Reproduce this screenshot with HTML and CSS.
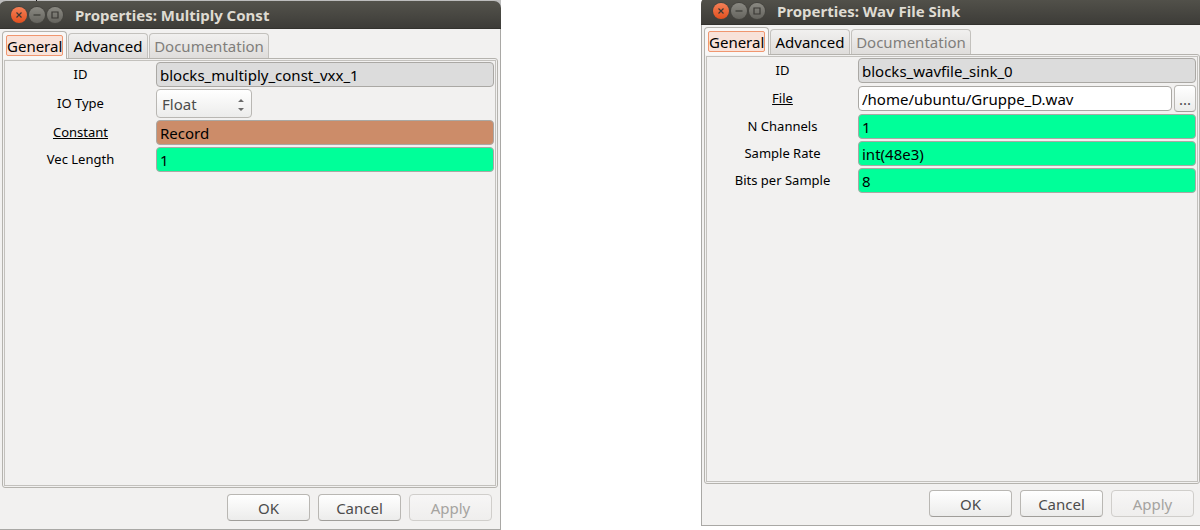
FILE: index.html
```html
<!DOCTYPE html>
<html lang="en">
<head>
<meta charset="utf-8">
<title>Block properties</title>
<link rel="stylesheet" href="styles.css">
</head>
<body>
<main class="desktop">
  <section class="slot slot-left">
    <form class="window" aria-label="Properties: Multiply Const">
      <header class="titlebar">
        <div class="controls">
          <button type="button" class="control close" aria-label="Close"><svg viewBox="0 0 16 16"><path d="M5.5 5.5l5 5M10.5 5.5l-5 5"/></svg></button>
          <button type="button" class="control" aria-label="Minimize"><svg viewBox="0 0 16 16"><path d="M4.5 8h7"/></svg></button>
          <button type="button" class="control" aria-label="Maximize"><svg viewBox="0 0 16 16"><path d="M5 5h6v6H5z"/></svg></button>
        </div>
        <h1 class="title">Properties: Multiply Const</h1>
      </header>
      <div class="body">
        <div class="tabs" role="tablist">
          <button type="button" class="tab active" role="tab" aria-selected="true"><span class="focus">General</span></button>
          <button type="button" class="tab advanced" role="tab">Advanced</button>
          <button type="button" class="tab documentation" role="tab" disabled>Documentation</button>
        </div>
        <div class="page">
          <div class="fields">
            <label for="m-id">ID</label>
            <input class="entry readonly" id="m-id" value="blocks_multiply_const_vxx_1" readonly>
            <label for="m-type">IO Type</label>
            <div class="combo">
              <select id="m-type"><option>Float</option></select>
              <svg class="arrows" viewBox="0 0 8 14"><path d="M1 4h6L4 1zM1 10h6l-3 3z"/></svg>
            </div>
            <label class="changed" for="m-const">Constant</label>
            <input class="entry complex" id="m-const" value="Record">
            <label for="m-vec">Vec Length</label>
            <input class="entry integer" id="m-vec" value="1">
          </div>
        </div>
        <footer class="actions">
          <button type="button" class="button">OK</button>
          <button type="button" class="button">Cancel</button>
          <button type="button" class="button" disabled>Apply</button>
        </footer>
      </div>
    </form>
  </section>
  <section class="slot slot-right">
    <form class="window" aria-label="Properties: Wav File Sink">
      <header class="titlebar">
        <div class="controls">
          <button type="button" class="control close" aria-label="Close"><svg viewBox="0 0 16 16"><path d="M5.5 5.5l5 5M10.5 5.5l-5 5"/></svg></button>
          <button type="button" class="control" aria-label="Minimize"><svg viewBox="0 0 16 16"><path d="M4.5 8h7"/></svg></button>
          <button type="button" class="control" aria-label="Maximize"><svg viewBox="0 0 16 16"><path d="M5 5h6v6H5z"/></svg></button>
        </div>
        <h1 class="title">Properties: Wav File Sink</h1>
      </header>
      <div class="body">
        <div class="tabs" role="tablist">
          <button type="button" class="tab active" role="tab" aria-selected="true"><span class="focus">General</span></button>
          <button type="button" class="tab advanced" role="tab">Advanced</button>
          <button type="button" class="tab documentation" role="tab" disabled>Documentation</button>
        </div>
        <div class="page">
          <div class="fields">
            <label for="w-id">ID</label>
            <input class="entry readonly" id="w-id" value="blocks_wavfile_sink_0" readonly>
            <label class="changed" for="w-file">File</label>
            <div class="file">
              <input class="entry" id="w-file" value="/home/ubuntu/Gruppe_D.wav">
              <button type="button" class="browse" aria-label="Browse">...</button>
            </div>
            <label for="w-channels">N Channels</label>
            <input class="entry integer" id="w-channels" value="1">
            <label for="w-rate">Sample Rate</label>
            <input class="entry integer" id="w-rate" value="int(48e3)">
            <label for="w-bits">Bits per Sample</label>
            <input class="entry integer" id="w-bits" value="8">
          </div>
        </div>
        <footer class="actions">
          <button type="button" class="button">OK</button>
          <button type="button" class="button">Cancel</button>
          <button type="button" class="button" disabled>Apply</button>
        </footer>
      </div>
    </form>
  </section>
</main>
</body>
</html>
```
FILE: styles.css
```css
* { box-sizing: border-box; }

body {
  margin: 0;
  background: #fff;
  color: #000;
  font: 15px/20px "Noto Sans", "Open Sans", sans-serif;
}

button, input, select { font: inherit; color: inherit; }

.desktop {
  display: grid;
  grid-template-columns: 501fr 499fr;
  column-gap: 200px;
  min-height: 100vh;
  overflow: hidden;
}

.slot { display: flex; }

.slot-left {
  margin-left: -1px;
  padding-top: 1px;
  background: linear-gradient(90deg, #bdbdbd 37px, #111 37px, #111 38px, #bdbdbd 38px) top / 100% 8px no-repeat;
}

.slot-right { margin: -3px -3px 4px 0; }

.window {
  flex: 1;
  display: flex;
  flex-direction: column;
  min-width: 0;
}

.titlebar {
  display: flex;
  align-items: center;
  gap: 12px;
  height: 28px;
  padding-left: 12px;
  border-bottom: 1px solid #33322e;
  border-radius: 7px 7px 0 0;
  background: linear-gradient(#54534c, #3d3c38);
}

.controls { display: flex; gap: 2px; }

.control {
  width: 16px;
  height: 16px;
  padding: 0;
  border: 0;
  border-radius: 50%;
  background: linear-gradient(#8a8982, #65645e);
  box-shadow: 0 0 0 1px #45443f;
}

.control.close { background: linear-gradient(#f58057, #e2501f); }

.control svg {
  display: block;
  fill: none;
  stroke: #3a3935;
  stroke-width: 1.2;
}

.title {
  margin: 0;
  color: #dfdbd2;
  font-size: 15px;
  font-weight: 700;
  line-height: 20px;
}

.body {
  flex: 1;
  display: flex;
  flex-direction: column;
  padding: 2px 2px 8px;
  border: 1px solid #a9a8a5;
  border-top: 0;
  background: #f2f1f0;
}

.tabs {
  display: flex;
  align-items: flex-end;
  gap: 1px;
  height: 27px;
}

.tab {
  height: 25px;
  padding: 0;
  border: 1px solid #c3c1bd;
  border-bottom: 0;
  border-radius: 4px 4px 0 0;
  background: linear-gradient(#f1f0ef, #dfdddb);
}

.tab.active {
  z-index: 1;
  width: 65px;
  height: 28px;
  margin-bottom: -1px;
  padding: 3px;
  border-color: #b5b3ae;
  background: #f8f7f6;
}

.focus {
  display: block;
  height: 21px;
  border: 1px solid #f0966f;
  border-radius: 2px;
  background: #f8e2d9;
  line-height: 20px;
}

.tab.advanced { width: 80px; }
.tab.documentation { width: 120px; color: #807e7b; }

.page {
  flex: 1;
  padding: 1px;
  border: 1px solid #b5b3ae;
  border-radius: 0 3px 3px 3px;
}

.fields {
  display: grid;
  grid-template-columns: 151px 1fr;
  align-content: start;
  row-gap: 2px;
  height: 100%;
  padding: 1px 1px 0 0;
  border: 1px solid #c3c1bd;
}

.fields label {
  align-self: center;
  padding-bottom: 2px;
  font-size: 13px;
  line-height: 18px;
  text-align: center;
}

.fields .changed { text-decoration: underline; }

.entry {
  width: 100%;
  min-width: 0;
  height: 25px;
  padding: 0 3px;
  border: 1px solid #aaa8a4;
  border-radius: 4px;
  background: #fff;
}

.entry.readonly { background: #dcdcdc; }
.entry.complex { background: #cc8c69; }
.entry.integer { background: #00ff99; }

.combo { position: relative; width: 96px; height: 29px; }

.combo select {
  width: 100%;
  height: 100%;
  padding: 0 5px;
  border: 1px solid #b9b7b3;
  border-radius: 4px;
  appearance: none;
  background: linear-gradient(#fff, #ececeb);
  color: #4c4c4c;
}

.arrows {
  position: absolute;
  top: 9px;
  right: 7px;
  width: 8px;
  height: 14px;
  fill: #6b6b6b;
  pointer-events: none;
}

.file { display: flex; align-items: center; gap: 2px; height: 27px; }

.browse {
  flex: none;
  width: 22px;
  height: 27px;
  padding: 0;
}

.browse, .button {
  border: 1px solid #b9b7b3;
  border-bottom-color: #a09e9a;
  border-radius: 4px;
  background: linear-gradient(#fff, #ececeb);
  color: #4c4c4c;
}

.actions {
  display: flex;
  justify-content: flex-end;
  gap: 8px;
  padding: 6px 6px 0 0;
}

.button { width: 83px; height: 27px; padding: 0; }

.button:disabled {
  border-color: #d0cecb;
  background: linear-gradient(#f7f6f6, #efeeed);
  color: #a5a3a0;
}
```
